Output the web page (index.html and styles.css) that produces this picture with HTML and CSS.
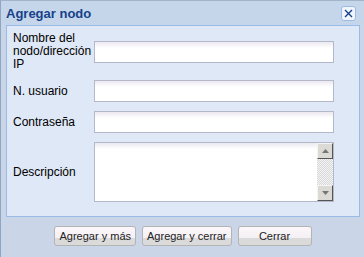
FILE: index.html
```html
<!DOCTYPE html>
<html>
<head>
<meta charset="UTF-8">
<title>Agregar nodo</title>
<link rel="stylesheet" href="styles.css">
</head>
<body>

<div class="window">
  <div class="winHeader">
    <span class="winTitle">Agregar nodo</span>
    <span class="winClose">
      <svg width="9" height="9" viewBox="0 0 9 9"><path d="M1 1L8 8M8 1L1 8" stroke="#15428b" stroke-width="1.4" fill="none"/></svg>
    </span>
  </div>

  <div class="winBody">
    <form class="form">
      <label class="lbl">Nombre del nodo/dirección IP</label>
      <input class="field" type="text">

      <label class="lbl">N. usuario</label>
      <input class="field" type="text">

      <label class="lbl">Contraseña</label>
      <input class="field" type="password">

      <label class="lbl">Descripción</label>
      <div class="area">
        <div class="areaText"></div>
        <div class="scroll">
          <div class="sbtn"><svg width="7" height="4" viewBox="0 0 7 4"><path d="M3.5 0L7 4H0Z" fill="#777"/></svg></div>
          <div class="track"></div>
          <div class="sbtn"><svg width="7" height="4" viewBox="0 0 7 4"><path d="M0 0H7L3.5 4Z" fill="#777"/></svg></div>
        </div>
      </div>
    </form>
  </div>

  <div class="winFooter">
    <button class="btn">Agregar y más</button>
    <button class="btn">Agregar y cerrar</button>
    <button class="btn btnWide">Cerrar</button>
  </div>
</div>

</body>
</html>
```

FILE: styles.css
```css
body{
  margin:0;
  background:#c9d7e9;
  font-family:"Liberation Sans", Arial, sans-serif;
  font-size:12px;
  color:#000;
}

.window{
  width:364px;
  height:257px;
  box-sizing:border-box;
  border-top:1px solid #a3b3c9;
  border-left:1px solid #8fa5c4;
  background:#cad6e7;
  display:flex;
  flex-direction:column;
}

.winHeader{
  height:24px;
  display:flex;
  align-items:center;
  justify-content:space-between;
  padding:0 8px 0 5px;
  background:#c6d6ea;
}

.winTitle{
  color:#15428b;
  font-weight:bold;
  font-size:13px;
}

.winClose{
  width:13px;
  height:13px;
  border:1px solid #99bbe8;
  border-radius:3px;
  background:#f2f6fc;
  display:flex;
  align-items:center;
  justify-content:center;
}

.winBody{
  margin:0 4px 0 5px;
  border:1px solid #99bbe8;
  background:#dfe8f6;
  padding:6px 24px 14px 6px;
}

.form{
  display:grid;
  grid-template-columns:81px 240px;
  row-gap:9px;
  align-items:center;
}

.lbl{
  line-height:13px;
  width:76px;
}

.field{
  height:22px;
  box-sizing:border-box;
  margin:0;
  border:1px solid #b5b8c8;
  background:linear-gradient(#ebe8f0, #fff 6px);
  outline:none;
}

.area{
  height:60px;
  box-sizing:border-box;
  border:1px solid #b5b8c8;
  background:linear-gradient(#ebe8f0, #fff 6px);
  display:flex;
}

.areaText{
  flex:1;
}

.scroll{
  width:16px;
  display:flex;
  flex-direction:column;
  background:repeating-conic-gradient(#d8d8d8 0 25%, #f4f4f4 0 50%) 0 0/2px 2px;
}

.sbtn{
  height:16px;
  box-sizing:border-box;
  background:#dcdad4;
  border:1px solid;
  border-color:#f4f4f4 #555 #555 #f4f4f4;
  display:flex;
  align-items:center;
  justify-content:center;
}

.track{
  flex:1;
}

.winFooter{
  display:flex;
  justify-content:center;
  gap:6px;
  padding:9px 0 0 1px;
}

.btn{
  height:20px;
  padding:0 4px;
  font-family:"Liberation Sans", Arial, sans-serif;
  font-size:11px;
  color:#222;
  border:1px solid #b4b4b4;
  border-radius:3px;
  background:linear-gradient(#faf6fa 0, #f4f0f4 60%, #dadada 60%, #dadada 100%);
}

.btnWide{
  width:74px;
}
```
